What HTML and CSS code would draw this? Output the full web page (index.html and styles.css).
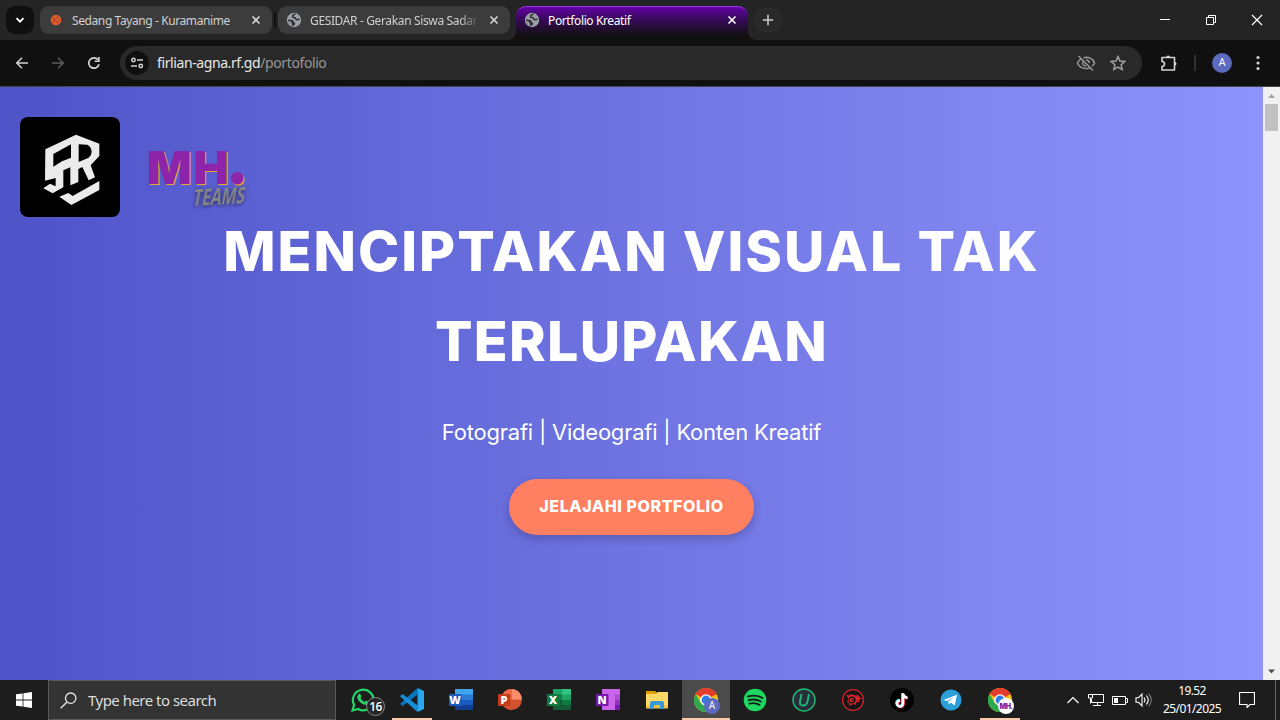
FILE: index.html
```
<!DOCTYPE html>
<html lang="id">
<head>
<meta charset="utf-8">
<title>Portfolio Kreatif</title>
<link rel="stylesheet" href="styles.css">
</head>
<body>
<svg class="defs" width="0" height="0">
  <defs>
    <symbol id="globe" viewBox="0 0 16 16">
      <circle cx="8" cy="8" r="7.200" fill="#9aa0a6"/>
      <path d="M9.500 2C8 2.300 6.600 3.200 6.500 4.500c0 1.600 1.600.8 2.600 1.200.8.400.3 1.600 1.300 2 1 .3 2-.5 3.300-.3" fill="none" stroke="#35313a" stroke-width="1.500"/>
      <path d="M2 7.500c1.800.1 4.200-.1 5.300 1.100.8.900.1 1.600 1.200 2 .8.300.7 1 .6 1.600l-1.300 1.600C4.500 14 2 11 2 7.500z" fill="#35313a"/>
      <path d="M2.500 9.800c1.800.3 2.300 1.300 2.500 3.200" stroke="#9aa0a6" stroke-width="2" fill="none"/>
    </symbol>
    <symbol id="close" viewBox="0 0 10 10"><path d="M1.500 1.500l7 7M8.500 1.500l-7 7" stroke="currentColor" stroke-width="1.600" fill="none"/></symbol>
    <symbol id="chrome" viewBox="0 0 24 24">
      <circle cx="12" cy="12" r="12" fill="#fbc116"/>
      <path d="M12 12L1.600 6A12 12 0 0 1 22.400 6Z" fill="#e33b2e"/>
      <path d="M1.600 6A12 12 0 0 0 12 24L17.200 15 12 12 6.800 15Z" fill="#2da94f"/>
      <path d="M12 6.500H22.700L22.400 6 12 0Z" fill="#e33b2e"/>
      <circle cx="12" cy="12" r="5.800" fill="#fff"/><circle cx="12" cy="12" r="4.400" fill="#2f7de9"/>
    </symbol>
  </defs>
</svg>
<div class="screen">
  <header class="tabstrip">
    <div class="tab-search"><svg width="10" height="10" viewBox="0 0 10 10"><path d="M1.500 3.200L5 6.700 8.500 3.200" fill="none" stroke="#fff" stroke-width="1.800"/></svg></div>
    <div class="tab">
      <svg class="fav" viewBox="0 0 16 16"><circle cx="8" cy="8" r="5.300" fill="#e25d2c"/><path d="M4 5l3 2 4-3M5 11l1-3 5 3M10 7l2 1" stroke="#9c3d1c" fill="none"/></svg>
      <span class="tab-title t1">Sedang Tayang - Kuramanime</span><svg class="x"><use href="#close"/></svg>
    </div>
    <i class="tab-sep"></i>
    <div class="tab">
      <svg class="fav"><use href="#globe"/></svg>
      <span class="tab-title t2 fade">GESIDAR - Gerakan Siswa Sadar</span><svg class="x"><use href="#close"/></svg>
    </div>
    <div class="tab active">
      <svg class="fav"><use href="#globe"/></svg>
      <span class="tab-title t3">Portfolio Kreatif</span><svg class="x"><use href="#close"/></svg>
    </div>
    <div class="new-tab"><svg width="12" height="12" viewBox="0 0 12 12"><path d="M6 .8v10.400M.8 6h10.400" stroke="#c8c8c8" stroke-width="1.600"/></svg></div>
    <div class="win-controls">
      <svg viewBox="0 0 46 40"><path d="M18 19.500h10" stroke="#fff"/></svg>
      <svg viewBox="0 0 46 40"><path d="M18.500 17.500h7v7h-7zM20.500 17.500v-2h7v7h-2" fill="none" stroke="#fff"/></svg>
      <svg viewBox="0 0 46 40"><path d="M18 15l10 10M28 15L18 25" stroke="#fff" stroke-width="1.200"/></svg>
    </div>
  </header>

  <div class="toolbar">
    <svg class="nav" viewBox="0 0 16 16"><path d="M14 8H3M8 2.700L2.700 8 8 13.300" fill="none" stroke="#d4d4d4" stroke-width="1.500"/></svg>
    <svg class="nav" viewBox="0 0 16 16"><path d="M2 8h11M8 2.700L13.300 8 8 13.300" fill="none" stroke="#5e5e5e" stroke-width="1.500"/></svg>
    <svg class="nav" viewBox="0 0 16 16"><path d="M13 9.300A5.200 5.200 0 1 1 12 4.700" fill="none" stroke="#d4d4d4" stroke-width="1.700"/><path d="M13.700 2v5H8.700V5.500h3.400V2z" fill="#d4d4d4"/></svg>
    <div class="omnibox">
      <span class="site-info"><svg width="14" height="14" viewBox="0 0 14 14" fill="none" stroke="#d2d2d2" stroke-width="1.500"><circle cx="3.500" cy="4" r="1.700"/><path d="M7 4h6M1 10h6"/><circle cx="10.800" cy="10" r="1.700"/></svg></span>
      <span class="url"><b>firlian-agna.rf.gd</b>/portofolio</span>
      <svg class="eye" viewBox="0 0 20 18" fill="none" stroke="#959595" stroke-width="1.600"><path d="M5 4.800C3.300 5.900 2.100 7.200 1.500 9 3 12.600 6.200 14.500 10 14.500c1.300 0 2.500-.2 3.500-.6M7.500 3.700C12.600 2.600 17 4.600 18.500 9c-.5 1.400-1.400 2.600-2.500 3.500M2.500 2l14.500 14.500"/><path d="M6.800 7.500c-.8 2.400.7 4.500 3.300 4.500M10 6c2 0 3.200 1.200 3.300 3"/></svg>
      <svg class="star" viewBox="0 0 16 16"><path d="M8 1.500l1.900 4.600 4.900.4-3.700 3.200 1.100 4.800L8 12l-4.200 2.500 1.100-4.800L1.200 6.500l4.900-.4z" fill="none" stroke="#a0a0a0" stroke-width="1.500"/></svg>
    </div>
    <svg class="ext" viewBox="0 0 18 18"><path d="M2 3.500h12.500V16H2v-3.500c3.400-.3 3.400-4.700 0-5z" fill="none" stroke="#d2d2d2" stroke-width="1.600" stroke-linejoin="round"/><path d="M6.200 3.500a2 2 0 0 1 4 0zM14.500 7.800a2 2 0 0 1 0 4z" fill="#d2d2d2"/></svg>
    <i class="bar-sep"></i>
    <span class="avatar">A</span>
    <svg class="dots" viewBox="0 0 4 16" fill="#d2d2d2"><circle cx="2" cy="2.500" r="1.600"/><circle cx="2" cy="8" r="1.600"/><circle cx="2" cy="13.500" r="1.600"/></svg>
  </div>

  <div class="viewport">
    <main class="hero">
      <div class="logos">
        <svg class="logo-sr" viewBox="60 51 300 300"><rect x="60" y="51" width="300" height="300" rx="24"/>
          <path fill="#ebebeb" fill-rule="evenodd" d="M136 148L228 104L298 131V168L272 196L285 232L266 241L247 201L235 207V246L211 256V202L190 211V262L158 280L130 265L150 251L167 259V234L135 242ZM160 162V200L186 184L213 173V133ZM236 133V186L266 173Q275 165 275 155Q274 140 262 134Z"/>
          <path fill="#ebebeb" d="M178 290L205 279L218 288L298 243V270L214 315Z"/></svg>
        <svg class="logo-mh" viewBox="0 0 110 70">
          <g class="mh-back"><text x="3.700" y="44.200" textLength="84" lengthAdjust="spacingAndGlyphs">MH</text><circle cx="94.300" cy="38.500" r="6.300"/></g>
          <g class="mh-front"><text x="2.700" y="43" textLength="84" lengthAdjust="spacingAndGlyphs">MH</text><circle cx="93.200" cy="37.300" r="6.300"/></g>
          <text class="teams" transform="translate(48 65) rotate(-3) skewX(-14)" textLength="52" lengthAdjust="spacingAndGlyphs">TEAMS</text>
        </svg>
      </div>
      <h1><span class="l1">MENCIPTAKAN VISUAL TAK</span><br><span class="l2">TERLUPAKAN</span></h1>
      <p class="sub">Fotografi | Videografi | Konten Kreatif</p>
      <a class="cta"><span>JELAJAHI PORTFOLIO</span></a>
    </main>
    <aside class="scroll">
      <svg viewBox="0 0 17 17"><path d="M5 11l3.500-4L12 11z" fill="#a3a3a3"/></svg>
      <i class="thumb"></i>
      <svg class="down" viewBox="0 0 17 17"><path d="M5 6.500h7L8.500 10.500z" fill="#505050"/></svg>
    </aside>
  </div>

  <footer class="taskbar">
    <div class="start"><svg width="16" height="16" viewBox="0 0 16 16" fill="#fff"><path d="M0 2.300L6.600 1.400V7.500H0zM7.400 1.300L16 0v7.500H7.400zM0 8.400h6.600v6.200L0 13.700zM7.400 8.400H16V16l-8.600-1.200z"/></svg></div>
    <div class="search"><svg width="17" height="17" viewBox="0 0 17 17" fill="none" stroke="#e8e8e8" stroke-width="1.300"><circle cx="10.700" cy="6.200" r="5.200"/><path d="M7 10L.7 16.300"/></svg><span>Type here to search</span></div>
    <nav class="apps">
      <div class="app wa"><svg viewBox="0 0 24 24"><path d="M1.500 22.500l1.600-5.700A10.300 10.300 0 1 1 7.200 21z" fill="#1d1d1d" stroke="#25d366" stroke-width="2.200"/><path d="M7.500 6.300c.8-.8 1.700-.6 2 .2l.8 1.900c.2.600-.5 1.200-.8 1.700 1 1.800 2.300 3 4.200 3.800l1.300-1.500 2.500 1.300c.5 1.700-1.300 3.200-3 3.100C10 16.300 5.500 11.500 6.300 8.200z" fill="#25d366"/></svg><span class="badge">16</span></div>
      <div class="app run"><svg viewBox="0 0 24 24"><path d="M17.500 0L24 3v18l-6.500 3z" fill="#29a8f0"/><path d="M17.500 0L1 15l-.9 1L2.500 18 18 6.200z" fill="#0878bd"/><path d="M17.500 24L0 8.300 2.500 6 18 17.800z" fill="#168fd8"/></svg></div>
      <div class="app"><svg viewBox="0 0 24 24"><rect x="6" y="1" width="18" height="6" fill="#41a5ee"/><rect x="6" y="6.500" width="18" height="5.500" fill="#2b7cd3"/><rect x="6" y="12" width="18" height="5" fill="#185abd"/><rect x="6" y="17" width="18" height="5" fill="#103f91"/><rect y="6" width="12.500" height="12" rx="1" fill="#1b5cbe"/><text class="ico" x="6" y="16">W</text></svg></div>
      <div class="app"><svg viewBox="0 0 24 24"><circle cx="13.500" cy="11.500" r="10.500" fill="#d35230"/><path d="M13.500 1v10.500H24A10.500 10.500 0 0 0 13.500 1" fill="#ff8f6b"/><path d="M13.500 1A10.500 10.500 0 0 0 3 11.500h10.500z" fill="#ed6c47"/><rect y="6" width="12.500" height="12" rx="1" fill="#c43e1c"/><text class="ico" x="6" y="16">P</text></svg></div>
      <div class="app"><svg viewBox="0 0 24 24"><path d="M6 1h9v6H6z" fill="#21a366"/><path d="M15 1h9v6h-9z" fill="#33c481"/><path d="M6 6.500h9V12H6z" fill="#107c41"/><path d="M15 6.500h9V12h-9z" fill="#21a366"/><path d="M6 12h18v10H6z" fill="#185c37"/><path d="M15 12h9v5h-9z" fill="#107c41"/><rect y="6" width="12.500" height="12" rx="1" fill="#107c41"/><text class="ico" x="6" y="16">X</text></svg></div>
      <div class="app"><svg viewBox="0 0 24 24"><path d="M6 1h18v21H6z" fill="#ca64ea"/><path d="M19 6.500h5V12h-5z" fill="#ae4bd5"/><path d="M19 12h5v5h-5z" fill="#9332bf"/><path d="M19 17h5v5h-5z" fill="#7719aa"/><rect y="6" width="12.500" height="12" rx="1" fill="#7719aa"/><text class="ico" x="6" y="16">N</text></svg></div>
      <div class="app"><svg viewBox="0 0 24 24"><path d="M1 3h9l2 2v3H1z" fill="#e0a000"/><path d="M1 6h10l1.500-2H23v16H1z" fill="#ffd866"/><path d="M1 17h22v3.500H1z" fill="#f5c34a"/><path d="M5 21v-6q0-2 2-2h10q2 0 2 2v6h-4v-4H9v4z" fill="#3898d8"/></svg></div>
      <div class="app focus"><svg><use href="#chrome"/></svg><span class="profile">A</span></div>
      <div class="app"><svg viewBox="0 0 24 24"><circle cx="12" cy="12" r="11.300" fill="#1ed760"/><path d="M5 8.500c5-1.500 10-1 14.300 1.400M5.800 12.200c4-1.200 8.300-.8 12 1.300M6.500 15.700c3.500-1 7-.6 10 1.100" fill="none" stroke="#172018" stroke-width="1.900" stroke-linecap="round"/></svg></div>
      <div class="app"><svg viewBox="0 0 24 24"><circle cx="12" cy="12" r="11" fill="#27303a" stroke="#20b877" stroke-width="1.400"/><path d="M9.500 6L8 13.500q-.5 4 3 4t4.500-4L17 6" fill="none" stroke="#20b877" stroke-width="1.900"/></svg></div>
      <div class="app"><svg viewBox="0 0 24 24"><circle cx="12" cy="12" r="10.400" fill="#151515" stroke="#d5242b" stroke-width="1.300"/><path d="M5 6.500l3 1 2-1.500 2 1 2-.5.500 2 2-2 4 4.500-2 .5-.5 3-2-1-1.500 3.500-2-1-4 2-.5-3-2-1 1.500-3z" fill="#d5242b"/><circle cx="11" cy="12" r="2.800" fill="none" stroke="#151515" stroke-width="1.300"/><path d="M11 12h4" stroke="#151515"/></svg></div>
      <div class="app"><svg viewBox="0 0 24 24"><circle cx="12" cy="12" r="12" fill="#000"/><g fill="none" stroke-width="2.400"><path d="M12.300 5v10a3 3 0 1 1-3-3M12.300 5c.3 2.700 2 4 4.400 4.200" stroke="#25f4ee"/><path d="M13.700 6v10a3 3 0 1 1-3-3M13.700 6c.3 2.700 2 4 4.400 4.200" stroke="#fe2c55"/><path d="M13 5.500v10a3 3 0 1 1-3-3M13 5.500c.3 2.700 2 4 4.400 4.200" stroke="#fff"/></g></svg></div>
      <div class="app"><svg viewBox="0 0 24 24"><circle cx="12" cy="12" r="10.500" fill="#2a9fd8"/><path d="M4.500 12L18 6.700 15.700 17.500 11.700 14.600 9.700 16.500 9.300 13.500 15 9 8 13z" fill="#fff"/></svg></div>
      <div class="app run"><svg><use href="#chrome"/></svg><span class="profile white">MH.</span></div>
    </nav>
    <div class="tray">
      <svg width="14" height="16" viewBox="0 0 14 16"><path d="M1.500 11L7 5.500 12.500 11" fill="none" stroke="#fff" stroke-width="1.200"/></svg>
      <svg width="18" height="16" viewBox="0 0 18 16" fill="none" stroke="#fff"><path d="M5.500 2.500h11v8h-12V7M10.500 10.500v3M6 13.500h8M1.500 2.500h4v3.500h-4zM3.500 6v5.500"/></svg>
      <svg width="16" height="16" viewBox="0 0 16 16"><path d="M.5 4.500h13v8H.5zM14 6.500h1.500v4H14" fill="none" stroke="#fff"/><path d="M2 6h4v5H2z" fill="#fff"/></svg>
      <svg width="18" height="16" viewBox="0 0 18 16" fill="none" stroke="#fff" stroke-width="1.100"><path d="M1 5.700h2.500l3.500-3.500v11.600l-3.500-3.500H1zM9 5.500q2 2.500 0 5M11.300 3.500q3.800 4.500 0 9"/><path d="M13.700 1.700q5 6.300 0 12.600" stroke="#777"/></svg>
    </div>
    <div class="clock"><span class="time">19.52</span><span class="date">25/01/2025</span></div>
    <svg class="notice" viewBox="0 0 16 16"><path d="M.5 .5h15v12h-4.500l-3 3v-3H.5z" fill="none" stroke="#fff" stroke-width="1.200"/></svg>
    <i class="desktop"></i>
  </footer>
</div>
</body>
</html>
```
FILE: styles.css
```
* { box-sizing: border-box; }
body { margin: 0; overflow: hidden; font-family: "Noto Sans", sans-serif; }
svg { display: block; flex: none; }
.defs { position: absolute; }
.screen { width: 1280px; height: 720px; display: flex; flex-direction: column; background: #101010; }

.tabstrip { height: 40px; flex: none; background: #242424; display: flex; align-items: flex-start; padding: 6px 0 0 6px; }
.tab-search { width: 28px; height: 28px; border-radius: 9px; background: #101010; display: flex; align-items: center; justify-content: center; margin-right: 6px; }
.tab { width: 232px; height: 28px; border-radius: 9px; background: #3c3c3c; color: #d0d0d0; display: flex; align-items: center; padding: 0 11px 0 8px; }
.tab-sep { width: 2px; height: 16px; margin: 6px 2px 0; background: #101010; }
.fav { width: 16px; height: 16px; margin-right: 8px; }
.tab-title { flex: 1; min-width: 0; overflow: hidden; white-space: nowrap; font-size: 12px; line-height: 20px; padding-top: 1px; }
.t1 { letter-spacing: -0.4px; }
.t2 { letter-spacing: -0.36px; }
.t3 { letter-spacing: -0.38px; color: #fff; }
.fade { -webkit-mask-image: linear-gradient(90deg, #000 150px, transparent 170px); mask-image: linear-gradient(90deg, #000 150px, transparent 170px); }
.x { width: 10px; height: 10px; margin-left: 4px; color: #d8d8d8; }
.active .x { color: #fff; margin-bottom: 1px; }
.tab.active { position: relative; margin-left: 6px; height: 34px; padding-bottom: 6px; border-radius: 10px 10px 0 0; border-top: 1px solid #9b32e8; background: linear-gradient(#6300a8, #3a0a5e 35%, #101010 88%); }
.active .fav { margin-bottom: 1px; }
.active::before, .active::after { content: ""; position: absolute; bottom: 0; width: 8px; height: 8px; }
.active::before { left: -8px; background: radial-gradient(circle at 0 0, transparent 7.5px, #101010 8px); }
.active::after { right: -8px; background: radial-gradient(circle at 100% 0, transparent 7.5px, #101010 8px); }
.new-tab { width: 28px; height: 28px; margin-left: 6px; border-radius: 50%; background: #292929; display: flex; align-items: center; justify-content: center; }
.win-controls { margin: -6px 0 0 auto; display: flex; }
.win-controls svg { width: 46px; height: 40px; }

.toolbar { height: 47px; flex: none; background: #101010; border-bottom: 1px solid #464646; display: flex; align-items: center; padding: 0 20px 0 14px; }
.nav { width: 16px; height: 16px; margin-right: 20px; }
.nav:nth-child(3) { margin-right: 18px; }
.omnibox { width: 1022px; flex: none; height: 34px; border-radius: 17px; background: #292929; display: flex; align-items: center; padding: 0 16px 0 5px; }
.site-info { width: 24px; height: 24px; border-radius: 50%; background: #101010; display: flex; align-items: center; justify-content: center; margin-right: 8px; }
.url { font-size: 14px; line-height: 20px; color: #979797; letter-spacing: -0.4px; flex: 1; padding-bottom: 1px; }
.url b { font-weight: 400; color: #e8e8e8; }
.eye { width: 20px; height: 18px; margin-right: 14px; }
.star { width: 16px; height: 16px; }
.ext { width: 18px; height: 18px; margin-left: 18px; }
.bar-sep { width: 2px; height: 16px; background: #303030; margin: 0 17px 0 16px; flex: none; }
.avatar { width: 20px; height: 20px; flex: none; border-radius: 50%; background: #5c6bc0; color: #fff; font: 400 11px/20px Roboto, sans-serif; text-align: center; margin-left: -1px; }
.dots { width: 4px; height: 16px; margin-left: 24px; }

.viewport { height: 593px; flex: none; display: flex; }
.hero { width: 1263px; background: linear-gradient(90deg, #4e54c8, #8f94fb); display: flex; flex-direction: column; align-items: center; color: #fff; font-family: Inter, sans-serif; }
.logos { align-self: stretch; height: 119px; padding: 30px 0 0 20px; display: flex; gap: 24px; }
.logo-sr { width: 100px; height: 100px; }
.logo-mh { width: 110px; height: 70px; margin-top: 24px; overflow: visible; }
.logo-mh text { font: 900 46px Inter, sans-serif; letter-spacing: 2px; }
.mh-back { fill: #e9a92c; }
.mh-front { fill: #8e24aa; }
.logo-mh .teams { font: 700 23px "Open Sans", sans-serif; letter-spacing: 0; fill: #85858c; filter: drop-shadow(0 1px 2px rgba(0,0,0,.6)); }
h1 { margin: 0; font-size: 55.500px; font-weight: 800; line-height: 90px; text-align: center; white-space: nowrap; }
.l1 { letter-spacing: 2px; }
.l2 { letter-spacing: 1.300px; }
.sub { margin: 27px 0 0; font-size: 22px; line-height: 38px; letter-spacing: -0.22px; white-space: nowrap; }
.cta { margin-top: 28px; width: 245px; height: 56px; border-radius: 28px; background: #ff7f61; box-shadow: 0 4px 10px rgba(0,0,0,.2); display: flex; align-items: center; justify-content: center; font-size: 16px; font-weight: 800; letter-spacing: 0.58px; padding-bottom: 2px; white-space: nowrap; }
.scroll { width: 17px; background: #f1f1f1; display: flex; flex-direction: column; align-items: center; }
.scroll svg { width: 17px; height: 17px; }
.thumb { width: 13px; height: 27px; background: #c1c1c1; }
.scroll .down { margin-top: auto; }

.taskbar { height: 40px; flex: none; background: #1d1d1d; display: flex; color: #fff; }
.start { width: 48px; display: flex; align-items: center; justify-content: center; }
.search { width: 288px; border: 1px solid #5a5a5a; background: #333; display: flex; align-items: center; padding-left: 11px; gap: 11px; font-size: 15px; color: #ddd; }
.search span { letter-spacing: -0.52px; white-space: nowrap; }
.apps { margin-left: 3px; display: flex; gap: 1px; }
.app { width: 48px; position: relative; display: flex; align-items: center; justify-content: center; }
.app > svg { width: 24px; height: 24px; }
.run::after, .focus::after { content: ""; position: absolute; bottom: 0; left: 4px; right: 4px; height: 2px; background: #ffc9ae; }
.focus { background: #4b4b4b; }
.focus::after { left: 0; right: 0; }
.ico { font: 800 11px "Open Sans", sans-serif; fill: #fff; text-anchor: middle; }
.badge { position: absolute; left: 27px; top: 17px; width: 19px; height: 19px; border: 1px solid #888; border-radius: 50%; background: #252525; font: 600 12px/17px "Open Sans", sans-serif; letter-spacing: -.5px; text-align: center; }
.profile { position: absolute; left: 22px; top: 18px; width: 16px; height: 16px; border-radius: 50%; background: #5c6bc0; font: 400 10px/16px Roboto, sans-serif; text-align: center; }
.white { background: #fff; color: #8320a0; font: 900 7px/17px Inter, sans-serif; letter-spacing: -.5px; }
.tray { margin-left: 42px; display: flex; align-items: center; gap: 7px; }
.clock { margin-left: 9px; width: 60px; display: flex; flex-direction: column; align-items: center; font-size: 12px; line-height: 18px; padding-top: 2px; white-space: nowrap; }
.clock span { letter-spacing: -.6px; }
.notice { width: 16px; height: 16px; margin: 12px 0 0 17px; }
.desktop { width: 1px; background: #666; margin-left: auto; margin-right: 4px; }
```
